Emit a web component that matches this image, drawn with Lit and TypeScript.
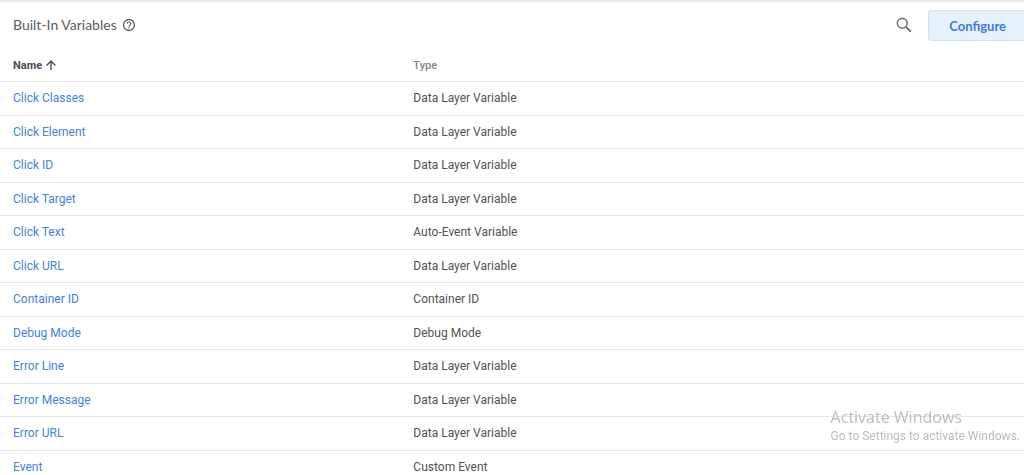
import { LitElement, html, css } from "lit";
import { customElement, property } from "lit/decorators.js";

interface Variable {
  name: string;
  type: string;
}

const DATA_LAYER = "Data Layer Variable";

const VARIABLES: Variable[] = [
  { name: "Click Classes", type: DATA_LAYER },
  { name: "Click Element", type: DATA_LAYER },
  { name: "Click ID", type: DATA_LAYER },
  { name: "Click Target", type: DATA_LAYER },
  { name: "Click Text", type: "Auto-Event Variable" },
  { name: "Click URL", type: DATA_LAYER },
  { name: "Container ID", type: "Container ID" },
  { name: "Debug Mode", type: "Debug Mode" },
  { name: "Error Line", type: DATA_LAYER },
  { name: "Error Message", type: DATA_LAYER },
  { name: "Error URL", type: DATA_LAYER },
  { name: "Event", type: "Custom Event" },
];

@customElement("variable-table")
export class VariableTable extends LitElement {
  @property({ attribute: false }) variables: Variable[] = [];

  static styles = css`
    :host {
      display: block;
    }
    .table {
      width: 100%;
      border-collapse: separate;
      border-spacing: 0;
      table-layout: fixed;
      font-size: 12px;
      line-height: 16px;
      color: #505357;
    }
    .name-col {
      width: 39%;
    }
    .head,
    .cell {
      box-sizing: border-box;
      height: 33px;
      padding: 0 0 1px 13px;
      text-align: left;
      vertical-align: middle;
      border-bottom: 1px solid #e6e6e8;
    }
    .head + .head,
    .cell + .cell {
      padding-left: 14px;
    }
    .row:nth-child(odd) .cell {
      height: 34px;
    }
    .head {
      padding-top: 2px;
      font-size: 11px;
      font-weight: 500;
      color: #80848a;
    }
    .sorted {
      color: #4a4d51;
      font-weight: 700;
    }
    .sort {
      display: flex;
      align-items: center;
      gap: 4px;
      padding: 0;
      border: 0;
      background: none;
      font: inherit;
      color: inherit;
      cursor: pointer;
    }
    .link {
      color: #4381e6;
      text-decoration: none;
    }
  `;

  render() {
    return html`
      <table class="table">
        <colgroup>
          <col class="name-col" />
          <col />
        </colgroup>
        <thead>
          <tr>
            <th class="head sorted" scope="col" aria-sort="ascending">
              <button class="sort" type="button">
                Name
                <svg width="10" height="12" viewBox="0 0 10 12" fill="none" stroke="currentColor" stroke-width="1.4" aria-hidden="true">
                  <path d="M5 10V1.6M.6 5.500L5 1.100l4.400 4.400" />
                </svg>
              </button>
            </th>
            <th class="head" scope="col">Type</th>
          </tr>
        </thead>
        <tbody>
          ${this.variables.map(
            (v) => html`
              <tr class="row">
                <td class="cell"><a class="link" href="#">${v.name}</a></td>
                <td class="cell">${v.type}</td>
              </tr>
            `
          )}
        </tbody>
      </table>
    `;
  }
}

@customElement("app-root")
export class AppRoot extends LitElement {
  static styles = css`
    :host {
      display: block;
      box-sizing: border-box;
      height: 100vh;
      overflow: hidden;
      border-top: 2px solid #e8e8ea;
      background: #fff;
      font-family: Roboto, "Liberation Sans", sans-serif;
    }
    .bar {
      display: flex;
      align-items: center;
      height: 47px;
      padding-left: 13px;
    }
    .heading {
      display: flex;
      align-items: center;
      gap: 6px;
      padding-bottom: 2px;
    }
    .title {
      margin: 0;
      font-family: Lato, sans-serif;
      font-size: 14px;
      line-height: 20px;
      font-weight: 400;
      color: #5a5d62;
    }
    .icon-button {
      display: flex;
      padding: 0;
      border: 0;
      background: none;
      cursor: pointer;
    }
    .help {
      color: #505357;
    }
    .search {
      margin: 0 16px 0 auto;
      padding-bottom: 2px;
      color: #75777c;
    }
    .configure {
      height: 31px;
      padding: 0 18px 0 20px;
      border: 1px solid #cfe3f7;
      border-right: 0;
      border-radius: 3px 0 0 3px;
      background: #e7f1fc;
      color: #4079e0;
      font-family: Lato, sans-serif;
      font-size: 13px;
      font-weight: 700;
      cursor: pointer;
    }
    .watermark {
      position: fixed;
      right: 4px;
      bottom: 31px;
      font-family: "Open Sans", "Noto Sans", sans-serif;
      color: #bcbcc0;
      pointer-events: none;
    }
    .watermark-title,
    .watermark-text {
      margin: 0;
      font-size: 16px;
      line-height: 22px;
    }
    .watermark-text {
      font-family: Roboto, sans-serif;
      font-size: 12px;
      line-height: 16px;
    }
  `;

  render() {
    return html`
      <header class="bar">
        <div class="heading">
          <h1 class="title">Built-In Variables</h1>
          <button class="icon-button help" type="button" aria-label="Help">
            <svg width="12" height="12" viewBox="0 0 24 24" fill="currentColor" aria-hidden="true">
              <path d="M12 0C5.400 0 0 5.400 0 12s5.400 12 12 12 12-5.400 12-12S18.600 0 12 0zm0 21.600c-5.300 0-9.600-4.300-9.600-9.600S6.700 2.400 12 2.400s9.600 4.300 9.600 9.600-4.300 9.600-9.600 9.600zM12 5c-2.500 0-4.500 2-4.500 4.400h2.300c0-1.200 1-2.200 2.200-2.200s2.200 1 2.200 2.200c0 2.200-3.400 2-3.400 5.600h2.300c0-2.500 3.400-2.800 3.400-5.600C16.500 7 14.500 5 12 5zM10.800 16.500h2.400v2.400h-2.400z" />
            </svg>
          </button>
        </div>
        <button class="icon-button search" type="button" aria-label="Search">
          <svg width="16" height="16" viewBox="0 0 16 16" fill="none" stroke="currentColor" aria-hidden="true">
            <circle cx="6.300" cy="6.300" r="4.900" stroke-width="1.600" />
            <path d="M9.800 9.800l5 5" stroke-width="2" />
          </svg>
        </button>
        <button class="configure" type="button">Configure</button>
      </header>
      <variable-table .variables=${VARIABLES}></variable-table>
      <aside class="watermark">
        <p class="watermark-title">Activate Windows</p>
        <p class="watermark-text">Go to Settings to activate Windows.</p>
      </aside>
    `;
  }
}
